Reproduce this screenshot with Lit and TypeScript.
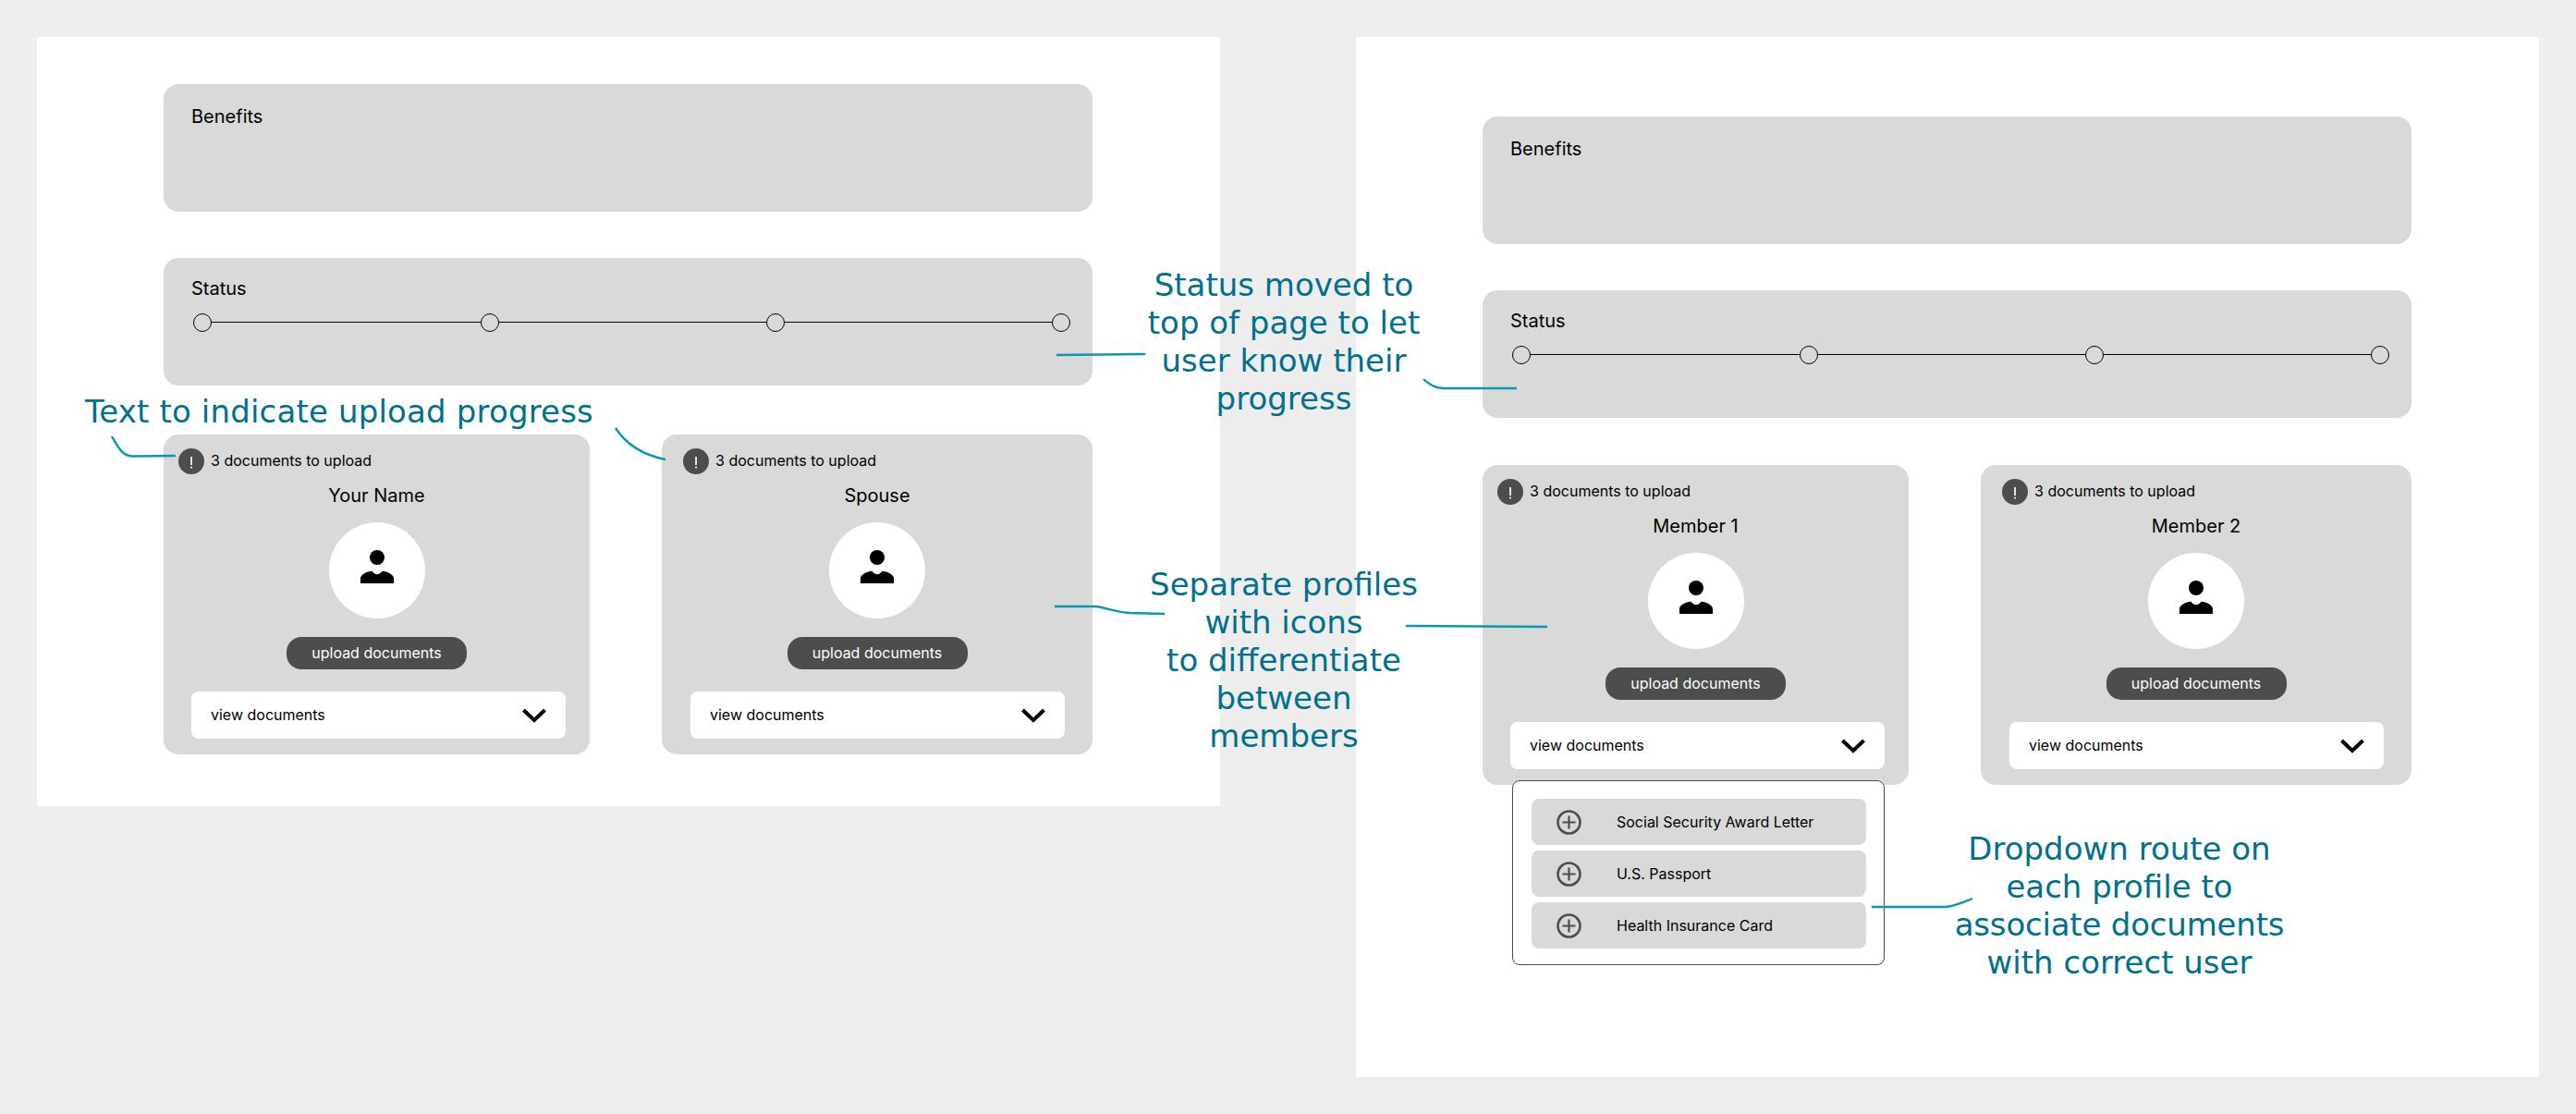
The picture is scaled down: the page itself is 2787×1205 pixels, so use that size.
import { LitElement, html, css, svg } from "lit";
import { customElement } from "lit/decorators.js";

const alertIcon = html`<svg class="alert-icon" viewBox="0 0 28 28" aria-hidden="true">
  <circle cx="14" cy="14" r="14" fill="#4d4d4d"></circle>
  <rect x="13.2" y="9" width="1.7" height="9" fill="#fff"></rect>
  <rect x="13.2" y="19.6" width="1.7" height="1.9" fill="#fff"></rect>
</svg>`;

const personIcon = html`<svg class="person" viewBox="0 0 36 36" aria-hidden="true">
  <circle cx="18" cy="8" r="8" fill="#000"></circle>
  <path fill="#000" d="M0 36V30.5C0 26.5 7 23 12.5 22.7C14 24.8 16 26.2 18 26.2C20 26.2 22 24.8 23.5 22.7C29 23 36 26.5 36 30.5V36Z"></path>
</svg>`;

const chevron = html`<svg class="chevron" viewBox="0 0 26 16" aria-hidden="true">
  <path d="M1.5 2L13 13L24.5 2" fill="none" stroke="#000" stroke-width="4"></path>
</svg>`;

const plusIcon = html`<svg class="plus" viewBox="0 0 27 27" aria-hidden="true">
  <circle cx="13.5" cy="13.5" r="12" fill="none" stroke="#4d4d4d" stroke-width="2.6"></circle>
  <path d="M13.5 6.5V20.5M6.5 13.5H20.5" fill="none" stroke="#4d4d4d" stroke-width="2.2"></path>
</svg>`;

const connectors = [
  "M121 472C128 484 132 493 143 493.5L190 493",
  "M666 463C677 480 695 492 720 497",
  "M1143 384L1239 383",
  "M1540 410C1546 416 1552 420 1562 420L1641 420",
  "M1141 656L1186 656C1200 658 1205 662 1222 663L1260 664",
  "M1521 677L1674 678",
  "M2025 981L2105 981C2116 980 2124 976 2134 972",
];

@customElement("app-root")
export class AppRoot extends LitElement {
  static styles = css`
    :host {
      display: block;
      position: relative;
      width: 2787px;
      height: 1205px;
      overflow: hidden;
      background: #ededed;
      font-family: Inter, "Liberation Sans", sans-serif;
      color: #000;
    }
    .canvas {
      display: flex;
      align-items: flex-start;
      gap: 147px;
      padding: 40px;
      box-sizing: border-box;
    }
    .board {
      width: 1280px;
      box-sizing: border-box;
      background: #fff;
      padding-left: 137px;
      display: flex;
      flex-direction: column;
    }
    .board-a { height: 832px; padding-top: 51px; }
    .board-b { height: 1125px; padding-top: 86px; }
    .panel {
      width: 1005px;
      height: 138px;
      box-sizing: border-box;
      background: #d9d9d9;
      border-radius: 16px;
      padding: 23px 30px 0;
      font-size: 20px;
      line-height: 24px;
      margin-bottom: 50px;
    }
    .status { padding-top: 21px; padding-right: 24px; }
    .board-a .status { margin-bottom: 53px; }
    .board-b .status { margin-bottom: 51px; }
    .panel-title { display: block; }
    .stepper {
      display: flex;
      align-items: center;
      margin-top: 15px;
      margin-left: 2px;
    }
    .dot {
      flex: none;
      width: 20px;
      height: 20px;
      box-sizing: border-box;
      border: 1px solid #000;
      border-radius: 50%;
      background: #d9d9d9;
    }
    .seg {
      flex: 1;
      height: 1px;
      background: #000;
      margin-top: -2px;
    }
    .seg.first { flex: 0 0 291px; }
    .cards {
      display: flex;
      gap: 78px;
      align-items: flex-start;
    }
    .card {
      position: relative;
      width: 461px;
      height: 346px;
      box-sizing: border-box;
      background: #d9d9d9;
      border-radius: 16px;
      padding: 15px 0 0;
      display: flex;
      flex-direction: column;
      align-items: center;
    }
    .card.wide { width: 466px; }
    .alert {
      align-self: stretch;
      display: flex;
      align-items: center;
      gap: 7px;
      padding-left: 16px;
      height: 28px;
      font-size: 16px;
    }
    .wide .alert { padding-left: 23px; }
    .alert-label { padding-bottom: 2px; }
    .alert-icon { width: 28px; height: 28px; flex: none; }
    .name {
      margin-top: 11px;
      font-size: 20px;
      line-height: 24px;
      text-align: center;
    }
    .avatar {
      margin-top: 17px;
      width: 104px;
      height: 104px;
      border-radius: 50%;
      background: #fff;
      display: flex;
      justify-content: center;
      padding-top: 30px;
      box-sizing: border-box;
    }
    .person { width: 36px; height: 36px; display: block; }
    .upload {
      margin-top: 20px;
      width: 195px;
      height: 35px;
      box-sizing: border-box;
      padding-bottom: 2px;
      border-radius: 16px;
      background: #4d4d4d;
      color: #fff;
      font-size: 16px;
      display: flex;
      align-items: center;
      justify-content: center;
    }
    .select {
      margin-top: 24px;
      align-self: flex-start;
      margin-left: 30px;
      width: 405px;
      height: 51px;
      box-sizing: border-box;
      border-radius: 8px;
      background: #fff;
      padding: 0 21px;
      display: flex;
      align-items: center;
      justify-content: space-between;
      font-size: 16px;
    }
    .select-label { padding-bottom: 2px; }
    .wide .select { margin-left: 31px; }
    .chevron { width: 26px; height: 16px; display: block; }
    .menu {
      position: absolute;
      left: 32px;
      top: 341px;
      width: 403px;
      height: 200px;
      box-sizing: border-box;
      border: 1px solid #4d4d4d;
      border-radius: 8px;
      background: #fff;
      padding: 19px 19px 0 20px;
      display: flex;
      flex-direction: column;
      gap: 6px;
    }
    .row {
      height: 50px;
      border-radius: 8px;
      background: #d9d9d9;
      display: flex;
      align-items: center;
      padding-left: 27px;
      gap: 38px;
      font-size: 16px;
    }
    .plus { width: 27px; height: 27px; flex: none; }
    .wires {
      position: absolute;
      left: 0;
      top: 0;
      width: 2787px;
      height: 1205px;
      pointer-events: none;
    }
    .note {
      position: absolute;
      font-family: "DejaVu Sans", sans-serif;
      font-size: 34px;
      line-height: 41px;
      color: #00708f;
      text-align: center;
      white-space: nowrap;
    }
    .note-progress { left: 92px; top: 425px; letter-spacing: 0.17px; }
    .note-status { left: 1139px; width: 500px; top: 288px; }
    .note-profiles { left: 1139px; width: 500px; top: 612px; }
    .note-dropdown { left: 2043px; width: 500px; top: 898px; }
    .tight { letter-spacing: -0.2px; }
  `;

  private card(name: string, wide: boolean, menu: boolean) {
    return html`<div class="card ${wide ? "wide" : ""}">
      <div class="alert">${alertIcon}<span class="alert-label">3 documents to upload</span></div>
      <div class="name">${name}</div>
      <div class="avatar">${personIcon}</div>
      <div class="upload">upload documents</div>
      <div class="select"><span class="select-label">view documents</span>${chevron}</div>
      ${menu
        ? html`<div class="menu">
            ${["Social Security Award Letter", "U.S. Passport", "Health Insurance Card"].map(
              (d) => html`<div class="row">${plusIcon}<span>${d}</span></div>`
            )}
          </div>`
        : ""}
    </div>`;
  }

  private panels() {
    return html`<div class="panel"><span class="panel-title">Benefits</span></div>
      <div class="panel status">
        <span class="panel-title">Status</span>
        <div class="stepper">
          <div class="dot"></div><div class="seg first"></div>
          <div class="dot"></div><div class="seg"></div>
          <div class="dot"></div><div class="seg"></div>
          <div class="dot"></div>
        </div>
      </div>`;
  }

  render() {
    return html`<div class="canvas">
        <section class="board board-a">
          ${this.panels()}
          <div class="cards">${this.card("Your Name", false, false)}${this.card("Spouse", true, false)}</div>
        </section>
        <section class="board board-b">
          ${this.panels()}
          <div class="cards">${this.card("Member 1", false, true)}${this.card("Member 2", true, false)}</div>
        </section>
      </div>
      <svg class="wires" viewBox="0 0 2787 1205" aria-hidden="true">
        ${connectors.map(
          (d) => svg`<path d=${d} fill="none" stroke="#0797b9" stroke-width="2.4"></path>`
        )}
      </svg>
      <div class="note note-progress">Text to indicate upload progress</div>
      <div class="note note-status">Status moved to<br />top of page to let<br />user know their<br />progress</div>
      <div class="note note-profiles">Separate profiles<br />with icons<br />to differentiate<br />between<br />members</div>
      <div class="note note-dropdown">Dropdown route on<br />each profile to<br /><span class="tight">associate documents</span><br />with correct user</div>`;
  }
}
